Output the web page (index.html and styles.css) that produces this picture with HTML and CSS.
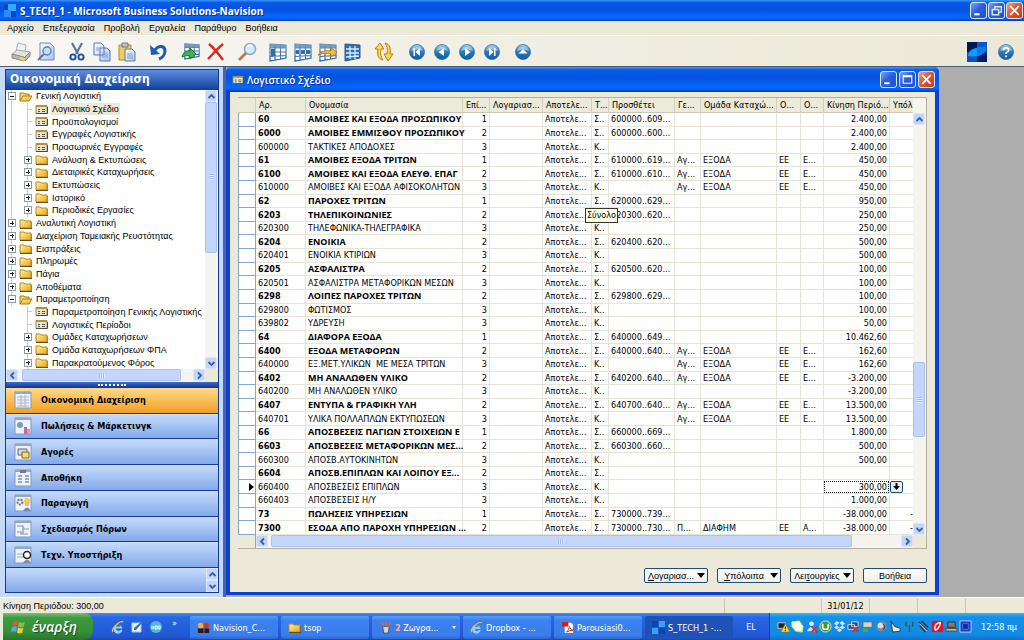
FILE: index.html
```html
<!DOCTYPE html>
<html lang="el">
<head>
<meta charset="utf-8">
<title>S_TECH_1 - Microsoft Business Solutions-Navision</title>
<link rel="stylesheet" href="styles.css">
</head>
<body>
<svg class="defs" aria-hidden="true">
  <defs>
    <linearGradient id="gBall" x1="0" y1="0" x2="0" y2="1"><stop offset="0" stop-color="#b4d8ee"/><stop offset=".45" stop-color="#2e7fbe"/><stop offset="1" stop-color="#0d5b9d"/></linearGradient>
    <linearGradient id="gFolder" x1="0" y1="0" x2="1" y2="1"><stop offset="0" stop-color="#fff0a0"/><stop offset="1" stop-color="#e9a81c"/></linearGradient>
    <linearGradient id="gGrid" x1="0" y1="0" x2="0" y2="1"><stop offset="0" stop-color="#6f93b8"/><stop offset="1" stop-color="#1f5fa8"/></linearGradient>
    <linearGradient id="gPaper" x1="0" y1="0" x2="1" y2="1"><stop offset="0" stop-color="#fff"/><stop offset="1" stop-color="#a9c4ee"/></linearGradient>
  </defs>
  <symbol id="folder" viewBox="0 0 13 11"><path d="M1 2h4l1 1h6v7H1z" fill="url(#gFolder)" stroke="#b98a1c"/><path d="M1 10.500h12V4" fill="none" stroke="#6b4d10"/></symbol>
  <symbol id="folder-open" viewBox="0 0 13 11"><path d="M1 10V2h4l1 1h4v2" fill="#f7d76a" stroke="#a87a18"/><path d="M1 10l3-5h9l-3 5z" fill="url(#gFolder)" stroke="#a87a18"/></symbol>
  <symbol id="form" viewBox="0 0 13 11"><path d="M1 1.500h11v8H1z" fill="#e9e4c8" stroke="#8a8878"/><path d="M1 2h11" stroke="#b09238" stroke-width="2"/><path d="M1 9.500h11.500V3" fill="none" stroke="#4c4a42"/><path d="M3 5.500h2M7 5.500h3M3 7.500h2M7 7.500h3" stroke="#555"/></symbol>
  <symbol id="tgrid" viewBox="0 0 20 20"><path d="M2 2l16 1v13L2 19z" fill="#fff"/><path d="M2 2l16 1v3L2 6z" fill="#7f9fc0"/><path d="M2 2l16 1v13L2 19zM2 6h16M2 10h16M2 14.500l16-1M7 2.500v16M12.500 3v14.500" fill="none" stroke="url(#gGrid)" stroke-width="1.200"/></symbol>
  <symbol id="ball" viewBox="0 0 18 18"><circle cx="9" cy="9" r="7.500" fill="url(#gBall)" stroke="#2a6a9e" stroke-width=".8"/><path d="M3 8a6.500 6.500 0 0 1 12 0q-6-3-12 0" fill="#fff" opacity=".4"/></symbol>
  <symbol id="nav-logo" viewBox="0 0 20 20"><path d="M0 0h20v20H0z" fill="#0a4fc0"/><path d="M0 0h10v10H0z" fill="#00175c"/><path d="M10 10h10v10H10z" fill="#001c70"/><path d="M10 0h10v10H10z" fill="#0758cf"/><path d="M1 13C2 7 9 4 19 6c0 6-7 10-18 8z" fill="#0b9cf5"/><path d="M10 5h9c0 6-4 8-9 9z" fill="#0a7ae4"/></symbol>
  <symbol id="ie" viewBox="0 0 14 14"><path d="M11 8.500H5a2.500 2.500 0 0 0 4.500 1.200h2A4.600 4.600 0 1 1 11.500 8.500M5 6.500h4.500a2.300 2.300 0 0 0-4.500 0" fill="#8fd0ff"/><path d="M2 12C-1 9 9 0 12.500 2" fill="none" stroke="#f3c433" stroke-width="1.200"/></symbol>
  <symbol id="up" viewBox="0 0 9 9"><path d="M1.500 6l3-3 3 3" fill="none" stroke="#3f5f98" stroke-width="1.800"/></symbol>
  <symbol id="down" viewBox="0 0 9 9"><path d="M1.500 3l3 3 3-3" fill="none" stroke="#3f5f98" stroke-width="1.800"/></symbol>
  <symbol id="left" viewBox="0 0 9 9"><path d="M6 1.500l-3 3 3 3" fill="none" stroke="#3f5f98" stroke-width="1.800"/></symbol>
  <symbol id="right" viewBox="0 0 9 9"><path d="M3 1.500l3 3-3 3" fill="none" stroke="#3f5f98" stroke-width="1.800"/></symbol>
  <symbol id="min" viewBox="0 0 14 14"><path d="M3 10.500h5" stroke="#fff" stroke-width="2"/></symbol>
  <symbol id="max" viewBox="0 0 14 14"><path d="M3 3.500h8v7H3z" fill="none" stroke="#fff"/><path d="M3 4h8" stroke="#fff" stroke-width="2"/></symbol>
  <symbol id="restore" viewBox="0 0 14 14"><path d="M5.500 6V3.500h6v5H9M3 6h6v5H3z" fill="none" stroke="#dce9ff" stroke-width="1.300"/></symbol>
  <symbol id="close" viewBox="0 0 14 14"><path d="M3 3l8 8M11 3l-8 8" stroke="#fff" stroke-width="1.700"/></symbol>
  <symbol id="page" viewBox="0 0 18 18"><path d="M1 1h16v16H1z" fill="#edf2fb" stroke="#8399b8"/><path d="M1 2h16" stroke="#8fa9cb" stroke-width="2"/></symbol>
</svg>

<header class="titlebar">
  <svg class="app-logo" viewBox="0 0 14 14"><path d="M5 0h8v7H5z" fill="#38a7ff"/><path d="M1 6h7v7H1z" fill="#2b8cf5"/><path d="M1 1h4v5H1zM8 7h5v6H8z" fill="#0646c8"/></svg>
  <h1>S_TECH_1 - Microsoft Business Solutions-Navision</h1>
  <div class="caption-buttons">
    <button aria-label="Ελαχιστοποίηση"><svg><use href="#min"/></svg></button>
    <button aria-label="Επαναφορά"><svg><use href="#restore"/></svg></button>
    <button class="x" aria-label="Κλείσιμο"><svg><use href="#close"/></svg></button>
  </div>
</header>

<nav class="menubar">
  <button>Αρχείο</button><button>Επεξεργασία</button><button>Προβολή</button><button>Εργαλεία</button><button>Παράθυρο</button><button>Βοήθεια</button>
</nav>

<div class="toolbar">
  <button aria-label="Εκτύπωση"><svg viewBox="0 0 20 20"><path d="M5 9l2-8 8 2-1 7z" fill="#eef4ff" stroke="#9fb3d0"/><path d="M1 12l5-4 13 2-5 6z" fill="#e4e4de" stroke="#a5a5a0"/><path d="M1 12v4l12 3v-4zM14 15v4l5-5v-4z" fill="#b9b9b4" stroke="#8a8a88"/><path d="M8 16l4 3 3-2-4-2z" fill="#f1d65c"/></svg></button>
  <button aria-label="Προεπισκόπηση"><svg viewBox="0 0 20 20"><path d="M4 1h10l4 4v13H4z" fill="url(#gPaper)" stroke="#6b8bc0"/><circle cx="11" cy="9" r="4" fill="#bfe0fa" stroke="#5d7ea8" stroke-width="1.400"/><path d="M8 12l-6 6" stroke="#6f6f90" stroke-width="2"/></svg></button>
  <button class="gap" aria-label="Αποκοπή"><svg viewBox="0 0 20 20"><path d="M5 1l6 11M15 1L9 12" stroke="#58779c" stroke-width="2.200"/><circle cx="6" cy="15" r="2.600" fill="none" stroke="#1a4fa0" stroke-width="1.900"/><circle cx="14" cy="15" r="2.600" fill="none" stroke="#1a4fa0" stroke-width="1.900"/></svg></button>
  <button aria-label="Αντιγραφή"><svg viewBox="0 0 20 20"><path d="M2 1h7l3 3v9H2zM8 6h7l3 3v10H8z" fill="url(#gPaper)" stroke="#5878b4"/><path d="M4 6h5M4 8h3M10 11h5M10 13h6M10 15h6" stroke="#7f9cd0"/></svg></button>
  <button aria-label="Επικόλληση"><svg viewBox="0 0 20 20"><path d="M2 3h12v15H2z" fill="#f0cf58" stroke="#a88b30"/><path d="M5 1h6v4H5z" fill="#bcc4cf" stroke="#777"/><path d="M8 7h7l3 3v9H8z" fill="url(#gPaper)" stroke="#5878b4"/><path d="M10 12h5M10 14h6M10 16h6" stroke="#7f9cd0"/></svg></button>
  <button class="gap" aria-label="Αναίρεση"><svg viewBox="0 0 20 20"><path d="M6 9C11 2 17 4 17 9c0 4-3 7-6 8" fill="none" stroke="#1c5cb4" stroke-width="3"/><path d="M2 3l1 10 9-1z" fill="#1c5cb4"/></svg></button>
  <button class="gap-wide" aria-label="Εισαγωγή"><svg viewBox="0 0 20 20"><use href="#tgrid" width="20" height="18" x="1"/><path d="M1 15c1-5 5-6 8-6V6l6 6-6 5v-3c-3-1-5 0-8 1z" fill="#45b346" stroke="#1f7a28"/></svg></button>
  <button aria-label="Διαγραφή"><svg viewBox="0 0 20 20"><path d="M3 2c5 4 9 9 14 16M17 2C11 7 7 12 2 17" stroke="#e0251b" stroke-width="2.400" fill="none"/></svg></button>
  <button class="gap" aria-label="Εύρεση"><svg viewBox="0 0 20 20"><circle cx="13" cy="7" r="5.500" fill="#d4ecfb" stroke="#8ea9c4" stroke-width="1.500"/><path d="M9 11l-7 7" stroke="#b47a50" stroke-width="2.800"/><path d="M10 5q3-3 5-1" stroke="#fff" fill="none" stroke-width="1.500"/></svg></button>
  <button class="gap" aria-label="Φίλτρο πεδίου"><svg viewBox="0 0 20 20"><use href="#tgrid" width="20" height="20"/><path d="M3 7h4v7H3z" fill="#2f6cb0"/></svg></button>
  <button aria-label="Φίλτρο πίνακα"><svg viewBox="0 0 20 20"><use href="#tgrid" width="20" height="20"/><path d="M3 8h14v4H3z" fill="#2f6cb0"/><path d="M7 8v4M12.500 8v4" stroke="#dbe9f6"/></svg></button>
  <button aria-label="Φίλτρο ροής"><svg viewBox="0 0 20 20"><use href="#tgrid" width="20" height="20"/><path d="M0 13c4-4 8-5 13-4V6l6 4-6 5v-3c-5-1-9-1-13 1z" fill="#f9c33a" stroke="#bd7a14"/></svg></button>
  <button aria-label="Εμφάνιση όλων"><svg viewBox="0 0 20 20"><path d="M2 2l15 1v13L2 19z" fill="#2e6fae" stroke="#37597f"/><path d="M3 7h13M3 11h13M3 15l13-1M7 4v13M12 4v13" stroke="#d5f0ff" stroke-width="1.300"/></svg></button>
  <button class="gap" aria-label="Ταξινόμηση"><svg viewBox="0 0 20 20"><path d="M9 18c-5-1-6-5-5-11H1l5-6 4 6H7c-1 5 0 8 2 11z" fill="#ffd451" stroke="#bd7a14"/><path d="M11 1c5 1 6 6 5 11h3l-5 7-4-7h3c1-5 0-8-2-11z" fill="#ffd451" stroke="#bd7a14"/></svg></button>
  <button class="gap-wide" aria-label="Πρώτη"><svg viewBox="-1 -1 20 20"><use href="#ball" width="18" height="18"/><path d="M12 5v8L7.500 9zM5.500 5h1.500v8H5.500z" fill="#fff"/></svg></button>
  <button aria-label="Προηγούμενη"><svg viewBox="-1 -1 20 20"><use href="#ball" width="18" height="18"/><path d="M11 5v8L5.500 9z" fill="#fff"/></svg></button>
  <button aria-label="Επόμενη"><svg viewBox="-1 -1 20 20"><use href="#ball" width="18" height="18"/><path d="M7 5v8l5.500-4z" fill="#fff"/></svg></button>
  <button aria-label="Τελευταία"><svg viewBox="-1 -1 20 20"><use href="#ball" width="18" height="18"/><path d="M6 5v8l4.500-4zM11 5h1.500v8H11z" fill="#fff"/></svg></button>
  <button class="gap" aria-label="Λίστα"><svg viewBox="-1 -1 20 20"><use href="#ball" width="18" height="18"/><path d="M4.500 10.500h9L9 6z" fill="#fff"/></svg></button>
  <button class="brand" aria-label="Navision"><svg><use href="#nav-logo"/></svg></button>
  <button aria-label="Βοήθεια"><svg viewBox="-1 -1 20 20"><use href="#ball" width="18" height="18"/><path d="M6.500 7.500c0-4 5.500-3.500 5 0-.3 1.500-2.500 1.500-2.500 3.500M9 12.500v1.800" fill="none" stroke="#fff" stroke-width="1.700"/></svg></button>
</div>

<main class="work">
  <aside class="sidebar">
    <div class="pane">
      <h2>Οικονομική Διαχείριση</h2>
      <div class="tree-box">
        <ul class="tree">
          <li><button class="tg minus" aria-label="Σύμπτυξη"></button><svg><use href="#folder-open"/></svg><a href="#">Γενική Λογιστική</a>
          <li class="sub leaf"><svg><use href="#form"/></svg><a href="#" class="current">Λογιστικό Σχέδιο</a>
          <li class="sub leaf"><svg><use href="#form"/></svg><a href="#">Προϋπολογισμοί</a>
          <li class="sub leaf"><svg><use href="#form"/></svg><a href="#">Εγγραφές Λογιστικής</a>
          <li class="sub leaf"><svg><use href="#form"/></svg><a href="#">Προσωρινές Εγγραφές</a>
          <li class="sub"><button class="tg" aria-label="Ανάπτυξη"></button><svg><use href="#folder"/></svg><a href="#">Ανάλυση &amp; Εκτυπώσεις</a>
          <li class="sub"><button class="tg" aria-label="Ανάπτυξη"></button><svg><use href="#folder"/></svg><a href="#">Διεταιρικές Καταχωρήσεις</a>
          <li class="sub"><button class="tg" aria-label="Ανάπτυξη"></button><svg><use href="#folder"/></svg><a href="#">Εκτυπώσεις</a>
          <li class="sub"><button class="tg" aria-label="Ανάπτυξη"></button><svg><use href="#folder"/></svg><a href="#">Ιστορικό</a>
          <li class="sub"><button class="tg" aria-label="Ανάπτυξη"></button><svg><use href="#folder"/></svg><a href="#">Περιοδικές Εργασίες</a>
          <li><button class="tg" aria-label="Ανάπτυξη"></button><svg><use href="#folder"/></svg><a href="#">Αναλυτική Λογιστική</a>
          <li><button class="tg" aria-label="Ανάπτυξη"></button><svg><use href="#folder"/></svg><a href="#">Διαχείριση Ταμειακής Ρευστότητας</a>
          <li><button class="tg" aria-label="Ανάπτυξη"></button><svg><use href="#folder"/></svg><a href="#">Εισπράξεις</a>
          <li><button class="tg" aria-label="Ανάπτυξη"></button><svg><use href="#folder"/></svg><a href="#">Πληρωμές</a>
          <li><button class="tg" aria-label="Ανάπτυξη"></button><svg><use href="#folder"/></svg><a href="#">Πάγια</a>
          <li><button class="tg" aria-label="Ανάπτυξη"></button><svg><use href="#folder"/></svg><a href="#">Αποθέματα</a>
          <li><button class="tg minus" aria-label="Σύμπτυξη"></button><svg><use href="#folder-open"/></svg><a href="#">Παραμετροποίηση</a>
          <li class="sub leaf end"><svg><use href="#form"/></svg><a href="#">Παραμετροποίηση Γενικής Λογιστικής</a>
          <li class="sub leaf end"><svg><use href="#form"/></svg><a href="#">Λογιστικές Περίοδοι</a>
          <li class="sub end"><button class="tg" aria-label="Ανάπτυξη"></button><svg><use href="#folder"/></svg><a href="#">Ομάδες Καταχωρήσεων</a>
          <li class="sub end"><button class="tg" aria-label="Ανάπτυξη"></button><svg><use href="#folder"/></svg><a href="#">Ομάδα Καταχωρήσεων ΦΠΑ</a>
          <li class="sub end"><button class="tg" aria-label="Ανάπτυξη"></button><svg><use href="#folder"/></svg><a href="#">Παρακρατούμενος Φόρος</a>
        </ul>
        <div class="vbar tree-v"><button aria-label="Πάνω"><svg><use href="#up"/></svg></button><span class="thumb"></span><button aria-label="Κάτω"><svg><use href="#down"/></svg></button></div>
        <div class="hbar"><button aria-label="Αριστερά"><svg><use href="#left"/></svg></button><span class="thumb"></span><button aria-label="Δεξιά"><svg><use href="#right"/></svg></button></div>
        <span class="corner"></span>
      </div>
      <div class="splitter"></div>
      <nav class="areas">
        <button class="on"><svg viewBox="0 0 18 18"><use href="#page"/><path d="M3 6h12M3 9h12M3 12h12M3 15h12M7 4v12M11 4v12" stroke="#a7b8cf"/></svg>Οικονομική Διαχείριση</button>
        <button><svg viewBox="0 0 18 18"><use href="#page"/><circle cx="6" cy="8" r="3" fill="#7b9cc8"/><path d="M10 10h3v7h-3z" fill="#c46a9a"/><path d="M13 12h3v5h-3z" fill="#d99"/></svg>Πωλήσεις &amp; Μάρκετινγκ</button>
        <button><svg viewBox="0 0 18 18"><use href="#page"/><path d="M4 6h9v6H4z" fill="#cfdcf0" stroke="#667"/><path d="M8 9h7v6H8z" fill="#f7de62" stroke="#786820"/></svg>Αγορές</button>
        <button><svg viewBox="0 0 18 18"><use href="#page"/><path d="M6 1h6v3H6z" fill="#778"/><path d="M4 7h4M4 10h4M4 13h4M11 7h4M11 10h4M11 13h4" stroke="#7f93b0" stroke-width="1.500"/></svg>Αποθήκη</button>
        <button><svg viewBox="0 0 18 18"><use href="#page"/><circle cx="6" cy="8" r="2.500" fill="none" stroke="#778" stroke-width="2" stroke-dasharray="2 1"/><circle cx="13" cy="7" r="3" fill="#f6cf3a"/><circle cx="13" cy="10" r="2.400" fill="#e9b98a"/><path d="M9 17q4-7 8 0z" fill="#6f86c0"/></svg>Παραγωγή</button>
        <button><svg viewBox="0 0 18 18"><use href="#page"/><path d="M3 6h6v3h6M3 12h4v2h7M9 9v5" fill="none" stroke="#8394ad" stroke-width="1.200"/></svg>Σχεδιασμός Πόρων</button>
        <button><svg viewBox="0 0 18 18"><use href="#page"/><path d="M3 8h6M3 11h6" stroke="#9ab"/><circle cx="13" cy="9" r="3.500" fill="#fff" stroke="#222" stroke-width="1.500"/><path d="M9 17q4-7 8 0z" fill="#889"/></svg>Τεχν. Υποστήριξη</button>
      </nav>
      <div class="areas-foot"><div class="vbar"><button aria-label="Πάνω"><svg><use href="#up"/></svg></button><button aria-label="Κάτω"><svg><use href="#down"/></svg></button></div></div>
    </div>
  </aside>

  <section class="window">
    <header class="window-title">
      <svg class="form-ico"><use href="#form"/></svg>
      <h2>Λογιστικό Σχέδιο</h2>
      <div class="caption-buttons">
        <button aria-label="Ελαχιστοποίηση"><svg><use href="#min"/></svg></button>
        <button aria-label="Μεγιστοποίηση"><svg><use href="#max"/></svg></button>
        <button class="x" aria-label="Κλείσιμο"><svg><use href="#close"/></svg></button>
      </div>
    </header>
    <div class="window-body">
      <div class="grid-box">
        <table class="ledger">
          <colgroup><col class="c18"><col class="c50"><col class="c157"><col class="c27"><col class="c53"><col class="c49"><col class="c17"><col class="c66"><col class="c26"><col class="c76"><col class="c24"><col class="c23"><col class="c66"><col class="c24"></colgroup>
          <thead><tr><th><th>Αρ.<th>Ονομασία<th>Επί...<th>Λογαριασ...<th>Αποτελε...<th>Τ...<th>Προσθέτει<th>Γε...<th>Ομάδα Καταχώ...<th>Ο...<th>Ο...<th>Κίνηση Περιό...<th>Υπόλ</thead>
          <tbody>
            <tr class="b"><td><td>60<td>ΑΜΟΙΒΕΣ ΚΑΙ ΕΞΟΔΑ ΠΡΟΣΩΠΙΚΟΥ<td>1<td><td>Αποτελε...<td>Σ..<td>600000..609...<td><td><td><td><td>2.400,00<td>
            <tr class="b"><td><td>6000<td>ΑΜΟΙΒΕΣ ΕΜΜΙΣΘΟΥ ΠΡΟΣΩΠΙΚΟΥ<td>2<td><td>Αποτελε...<td>Σ..<td>600000..600...<td><td><td><td><td>2.400,00<td>
            <tr><td><td>600000<td>ΤΑΚΤΙΚΕΣ ΑΠΟΔΟΧΕΣ<td>3<td><td>Αποτελε...<td>Κ..<td><td><td><td><td><td>2.400,00<td>
            <tr class="b"><td><td>61<td>ΑΜΟΙΒΕΣ ΕΞΟΔΑ ΤΡΙΤΩΝ<td>1<td><td>Αποτελε...<td>Σ..<td>610000..619...<td>Αγ...<td>ΕΞΟΔΑ<td>ΕΕ<td>Ε...<td>450,00<td>
            <tr class="b"><td><td>6100<td>ΑΜΟΙΒΕΣ ΚΑΙ ΕΞΟΔΑ ΕΛΕΥΘ. ΕΠΑΓ<td>2<td><td>Αποτελε...<td>Σ..<td>610000..610...<td>Αγ...<td>ΕΞΟΔΑ<td>ΕΕ<td>Ε...<td>450,00<td>
            <tr><td><td>610000<td>ΑΜΟΙΒΕΣ ΚΑΙ ΕΞΟΔΑ ΑΦΙΣΟΚΟΛΗΤΩΝ<td>3<td><td>Αποτελε...<td>Κ..<td><td>Αγ...<td>ΕΞΟΔΑ<td>ΕΕ<td>Ε...<td>450,00<td>
            <tr class="b"><td><td>62<td>ΠΑΡΟΧΕΣ ΤΡΙΤΩΝ<td>1<td><td>Αποτελε...<td>Σ..<td>620000..629...<td><td><td><td><td>950,00<td>
            <tr class="b"><td><td>6203<td>ΤΗΛΕΠΙΚΟΙΝΩΝΙΕΣ<td>2<td><td>Αποτελε...<td>Σ..<td>620300..620...<td><td><td><td><td>250,00<td>
            <tr><td><td>620300<td>ΤΗΛΕΦΩΝΙΚΑ-ΤΗΛΕΓΡΑΦΙΚΑ<td>3<td><td>Αποτελε...<td>Κ..<td><td><td><td><td><td>250,00<td>
            <tr class="b"><td><td>6204<td>ΕΝΟΙΚΙΑ<td>2<td><td>Αποτελε...<td>Σ..<td>620400..620...<td><td><td><td><td>500,00<td>
            <tr><td><td>620401<td>ΕΝΟΙΚΙΑ ΚΤΙΡΙΩΝ<td>3<td><td>Αποτελε...<td>Κ..<td><td><td><td><td><td>500,00<td>
            <tr class="b"><td><td>6205<td>ΑΣΦΑΛΙΣΤΡΑ<td>2<td><td>Αποτελε...<td>Σ..<td>620500..620...<td><td><td><td><td>100,00<td>
            <tr><td><td>620501<td>ΑΣΦΑΛΙΣΤΡΑ ΜΕΤΑΦΟΡΙΚΩΝ ΜΕΣΩΝ<td>3<td><td>Αποτελε...<td>Κ..<td><td><td><td><td><td>100,00<td>
            <tr class="b"><td><td>6298<td>ΛΟΙΠΕΣ ΠΑΡΟΧΕΣ ΤΡΙΤΩΝ<td>2<td><td>Αποτελε...<td>Σ..<td>629800..629...<td><td><td><td><td>100,00<td>
            <tr><td><td>629800<td>ΦΩΤΙΣΜΟΣ<td>3<td><td>Αποτελε...<td>Κ..<td><td><td><td><td><td>100,00<td>
            <tr><td><td>639802<td>ΥΔΡΕΥΣΗ<td>3<td><td>Αποτελε...<td>Κ..<td><td><td><td><td><td>50,00<td>
            <tr class="b"><td><td>64<td>ΔΙΑΦΟΡΑ ΕΞΟΔΑ<td>1<td><td>Αποτελε...<td>Σ..<td>640000..649...<td><td><td><td><td>10.462,60<td>
            <tr class="b"><td><td>6400<td>ΕΞΟΔΑ ΜΕΤΑΦΟΡΩΝ<td>2<td><td>Αποτελε...<td>Σ..<td>640000..640...<td>Αγ...<td>ΕΞΟΔΑ<td>ΕΕ<td>Ε...<td>162,60<td>
            <tr><td><td>640000<td>ΕΞ.ΜΕΤ.ΥΛΙΚΩΝ&nbsp; ΜΕ ΜΕΣΑ ΤΡΙΤΩΝ<td>3<td><td>Αποτελε...<td>Κ..<td><td>Αγ...<td>ΕΞΟΔΑ<td>ΕΕ<td>Ε...<td>162,60<td>
            <tr class="b"><td><td>6402<td>ΜΗ ΑΝΑΛΩΘΕΝ ΥΛΙΚΟ<td>2<td><td>Αποτελε...<td>Σ..<td>640200..640...<td>Αγ...<td>ΕΞΟΔΑ<td>ΕΕ<td>Ε...<td>-3.200,00<td>
            <tr><td><td>640200<td>ΜΗ ΑΝΑΛΩΘΕΝ ΥΛΙΚΟ<td>3<td><td>Αποτελε...<td>Κ..<td><td><td><td><td><td>-3.200,00<td>
            <tr class="b"><td><td>6407<td>ΕΝΤΥΠΑ &amp; ΓΡΑΦΙΚΗ ΥΛΗ<td>2<td><td>Αποτελε...<td>Σ..<td>640700..640...<td>Αγ...<td>ΕΞΟΔΑ<td>ΕΕ<td>Ε...<td>13.500,00<td>
            <tr><td><td>640701<td>ΥΛΙΚΑ ΠΟΛΛΑΠΛΩΝ ΕΚΤΥΠΩΣΕΩΝ<td>3<td><td>Αποτελε...<td>Κ..<td><td>Αγ...<td>ΕΞΟΔΑ<td>ΕΕ<td>Ε...<td>13.500,00<td>
            <tr class="b"><td><td>66<td>ΑΠΟΣΒΕΣΕΙΣ ΠΑΓΙΩΝ ΣΤΟΙΧΕΙΩΝ Ε<td>1<td><td>Αποτελε...<td>Σ..<td>660000..669...<td><td><td><td><td>1.800,00<td>
            <tr class="b"><td><td>6603<td>ΑΠΟΣΒΕΣΕΙΣ ΜΕΤΑΦΟΡΙΚΩΝ ΜΕΣ...<td>2<td><td>Αποτελε...<td>Σ..<td>660300..660...<td><td><td><td><td>500,00<td>
            <tr><td><td>660300<td>ΑΠΟΣΒ.ΑΥΤΟΚΙΝΗΤΩΝ<td>3<td><td>Αποτελε...<td>Κ..<td><td><td><td><td><td>500,00<td>
            <tr class="b"><td><td>6604<td>ΑΠΟΣΒ.ΕΠΙΠΛΩΝ ΚΑΙ ΛΟΙΠΟΥ ΕΞ...<td>2<td><td>Αποτελε...<td>Σ..<td><td><td><td><td><td><td>
            <tr><td><i class="pointer"></i><td>660400<td>ΑΠΟΣΒΕΣΕΙΣ ΕΠΙΠΛΩΝ<td>3<td><td>Αποτελε...<td>Κ..<td><td><td><td><td><td class="edit"><input value="300,00" aria-label="Κίνηση Περιόδου"><td class="look"><button aria-label="Αναζήτηση"><svg viewBox="0 0 9 9"><path d="M3.500 1h2v3H8L4.500 8 1 4h2.500z"/></svg></button>
            <tr><td><td>660403<td>ΑΠΟΣΒΕΣΕΙΣ Η/Υ<td>3<td><td>Αποτελε...<td>Κ..<td><td><td><td><td><td>1.000,00<td>
            <tr class="b"><td><td>73<td>ΠΩΛΗΣΕΙΣ ΥΠΗΡΕΣΙΩΝ<td>1<td><td>Αποτελε...<td>Σ..<td>730000..739...<td><td><td><td><td>-38.000,00<td>-
            <tr class="b"><td><td>7300<td>ΕΣΟΔΑ ΑΠΟ ΠΑΡΟΧΗ ΥΠΗΡΕΣΙΩΝ ...<td>2<td><td>Αποτελε...<td>Σ..<td>730000..730...<td>Π...<td>ΔΙΑΦΗΜ<td>ΕΕ<td>Α...<td>-38.000,00<td>-
          </tbody>
        </table>
        <div class="vbar grid-v"><button aria-label="Πάνω"><svg><use href="#up"/></svg></button><span class="thumb"></span><button aria-label="Κάτω"><svg><use href="#down"/></svg></button></div>
        <div class="hbar grid-h"><span class="stub"></span><button aria-label="Αριστερά"><svg><use href="#left"/></svg></button><span class="thumb"></span><button aria-label="Δεξιά"><svg><use href="#right"/></svg></button></div>
        <span class="corner"></span>
        <div class="tooltip" role="tooltip">Σύνολο</div>
      </div>
      <div class="actions">
        <button class="menu"><span><u>Λ</u>ογαριασ...</span></button>
        <button class="menu"><span><u>Υ</u>πόλοιπα</span></button>
        <button class="menu"><span>Λει<u>τ</u>ουργίες</span></button>
        <button><span>Βοήθεια</span></button>
      </div>
    </div>
  </section>
</main>

<footer class="status"><span class="msg">Κίνηση Περιόδου: 300,00</span><span class="s95"></span><span class="s48 date">31/01/12</span><span class="s48"></span><span class="s48"></span><span class="s42"></span></footer>

<div class="taskbar">
  <button class="start"><svg viewBox="0 0 16 16"><path d="M2 3q3-2 5-.5L6 7q-2-1.500-5 0z" fill="#e8542c"/><path d="M8 3q3 1.500 6 0l-1.500 5Q10 9 7 7.500z" fill="#7fc33d"/><path d="M1 8q3-1.500 5 0l-1 5q-2-1.500-5 0z" fill="#5aa0f2"/><path d="M7 8.500q3 1.500 5.500.5L11 14q-3 1-5-.5z" fill="#f7cc38"/></svg>έναρξη</button>
  <div class="quick">
    <button aria-label="Internet Explorer"><svg><use href="#ie"/></svg></button>
    <button aria-label="Επιφάνεια εργασίας"><svg viewBox="0 0 14 14"><path d="M2 3h9v9H2z" fill="#e8f2ff" stroke="#9cf"/><path d="M4 8l7-6 1 1-6 7H4z" fill="#3c6ea8"/></svg></button>
    <button aria-label="KBS"><svg viewBox="0 0 14 14"><circle cx="7" cy="7" r="6" fill="#55b7d8"/><path d="M3 6v3M4.500 6v3M6 6h2v3H6zM9 6h2v3H9z" stroke="#dff" fill="none"/></svg></button>
    <span class="more">»</span>
  </div>
  <div class="tasks">
    <button><svg viewBox="0 0 14 14"><circle cx="4" cy="5" r="3" fill="#e9b23c"/><circle cx="10" cy="5" r="3" fill="#c23a20"/><path d="M1 13V8h6v5zM8 13V8h5v5z" fill="#2c1a1a"/></svg><span>Navision_C...</span></button>
    <button><svg viewBox="0 0 13 11"><use href="#folder"/></svg><span>tsop</span></button>
    <button class="group"><svg viewBox="0 0 14 14"><path d="M4 6h7l-1 7H5z" fill="#c9d6e8" stroke="#456"/><path d="M5 6L3 1M8 6V1M10 6l2-4" stroke="#e5632a" stroke-width="1.600"/></svg><span><b>2</b> Ζωγρα...</span></button>
    <button><svg><use href="#ie"/></svg><span>Dropbox - ...</span></button>
    <button><svg viewBox="0 0 14 14"><path d="M4 2h7l2 2v9H4z" fill="#fff"/><path d="M1 1h7v5H1z" fill="#d2201c"/><path d="M6 12q3-3 3-6 1 3 4 4-4 0-7 2z" fill="none" stroke="#d2201c"/></svg><span>Parousiasi0...</span></button>
    <button class="active"><svg viewBox="0 0 14 14"><path d="M7 0h7v7H7zM0 7h7v7H0z" fill="#3aa0f8"/><path d="M0 0h7v7H0zM7 7h7v7H7z" fill="#0a46b8"/></svg><span>S_TECH_1 -...</span></button>
  </div>
  <button class="lang">EL</button>
  <div class="tray">
    <svg viewBox="0 0 14 14"><path d="M1 3h8v6H1z" fill="#223" stroke="#ccd"/><path d="M9 4l5 9H4z" fill="#ffd52e" stroke="#8a6a00" stroke-width=".6"/><path d="M9 7v3M9 11v1" stroke="#000"/></svg>
    <svg viewBox="0 0 14 14"><path d="M1 2l8-1 4 6-1 6-7-1-4-5z" fill="#f4ffd8" stroke="#c8e86a"/></svg>
    <svg viewBox="0 0 14 14"><circle cx="7" cy="4" r="2.500" fill="#dff"/><path d="M2 12q5-9 10 0z" fill="#bfe6ff"/><path d="M7 7l6 6M13 7l-6 6" stroke="#e02a20" stroke-width="1.800"/></svg>
    <svg viewBox="0 0 14 14"><circle cx="7" cy="7" r="6" fill="#3d9d3a" stroke="#d8f0d0"/><path d="M4 4v4q0 2 3 2t3-2V4" fill="none" stroke="#fff" stroke-width="1.800"/></svg>
    <svg viewBox="0 0 14 14"><path d="M4 1l3 2-3 3-3-2zM10 1l3 3-3 2-3-3zM4 6l3 2-3 2-3-2zM10 6l3 2-3 2-3-2zM7 9l3 2-3 2-3-2z" fill="#cfeaff"/></svg>
    <svg viewBox="0 0 14 14"><path d="M1 5h7v5H1zM5 2h7v5H5z" fill="#334a80" stroke="#cde"/><path d="M6 7l6 6M12 7l-6 6" stroke="#e02a20" stroke-width="1.800"/></svg>
    <svg viewBox="0 0 14 14"><path d="M2 2h10v6H2z" fill="#cfd4cc" stroke="#666"/><path d="M2 9h5v4H2z" fill="#49ad3c"/></svg>
    <svg viewBox="0 0 14 14"><circle cx="7" cy="7" r="5.500" fill="#8c8c8c"/><circle cx="6" cy="6" r="3" fill="#ddd"/><path d="M9 4q3 3 0 7" stroke="#333" fill="none"/></svg>
    <svg viewBox="0 0 14 14"><path d="M2 1l4 6 6 2v3l-8 1z" fill="#eee" stroke="#333"/></svg>
    <svg viewBox="0 0 14 14"><path d="M7 5v8M4 2q-2 3 0 5M10 2q2 3 0 5" fill="none" stroke="#2b5d36" stroke-width="1.400"/></svg>
    <svg viewBox="0 0 14 14"><path d="M2 2l9 9M5 1l7 7M3 6l6 7" stroke="#2a3140" stroke-width="1.400"/><path d="M3 4l8 8" stroke="#dde"/></svg>
    <svg viewBox="0 0 14 14"><path d="M1 1h12v12H1z" fill="#d8182c"/><path d="M4 10q0-7 6-7-1 7-6 8" fill="none" stroke="#fff" stroke-width="1.500"/></svg>
    <svg viewBox="0 0 14 14"><path d="M3 2h8v6H3z" fill="#7a7a72" stroke="#333"/><path d="M1 9h12v3H1z" fill="#b8b8a8" stroke="#444"/></svg>
    <svg viewBox="0 0 14 14"><path d="M1 1h12v12H1z" fill="#1840c8" stroke="#c8d8ff"/><path d="M4 4h6v6H4z" fill="#0828a0" stroke="#4878f0"/></svg>
    <time>12:58 πμ</time>
  </div>
</div>
</body>
</html>
```
FILE: styles.css
```css
* { box-sizing: border-box; }
body {
  margin: 0;
  height: 100vh;
  display: flex;
  flex-direction: column;
  overflow: hidden;
  background: #ece9d8;
  color: #000;
  font: 9px/12px "DejaVu Sans Condensed", "DejaVu Sans", "Noto Sans", sans-serif;
}
button, input { font: inherit; color: inherit; padding: 0; margin: 0; border: 0; background: none; }
h1, h2, ul { margin: 0; padding: 0; }
ul { list-style: none; }
a { color: inherit; text-decoration: none; }
svg { display: block; flex: none; }
.defs { position: absolute; width: 0; height: 0; }

/* Window captions */
.titlebar, .window-title {
  display: flex;
  align-items: center;
  color: #fff;
  background: linear-gradient(#3c97ff 0, #0a5be6 12%, #0453e0 45%, #0468fb 80%, #0263f7 88%, #0238b0 100%);
}
.titlebar { height: 21px; padding: 0 1px 0 3px; gap: 3px; flex: none; }
.app-logo { width: 14px; height: 14px; }
.titlebar h1, .window-title h2 {
  flex: 1;
  font: bold 10px/14px "Open Sans", "Noto Sans", sans-serif;
  text-shadow: 1px 1px #0a2f8c;
}
.window-title h2 { font-weight: 600; }
.caption-buttons { display: flex; gap: 1px; }
.caption-buttons button {
  width: 17px;
  height: 17px;
  border: 1px solid #d9e5ff;
  border-radius: 3px;
  background: linear-gradient(135deg, #7ea5f5, #2a5fe0 45%, #1c4ed2);
}
.caption-buttons .x { background: linear-gradient(135deg, #f0a088, #dd5a34 45%, #c23a12); }
.caption-buttons svg { width: 15px; height: 15px; }

/* Menu and tool bars */
.menubar, .tree, .status, .actions { font-family: "Liberation Sans", Arial, sans-serif; }
.menubar {
  height: 15px;
  flex: none;
  display: flex;
  align-items: center;
  gap: 9px;
  padding: 0 7px;
  border-bottom: 1px solid #fff;
}
.toolbar {
  height: 31px;
  flex: none;
  display: flex;
  align-items: center;
  padding: 1px 6px 0 8px;
  background: linear-gradient(90deg, #f8f7f4, #f2f0e6 40%, #ebe8d7);
  border-bottom: 1px solid #4d5c70;
}
.toolbar button { width: 25px; height: 25px; display: grid; place-items: center; }
.toolbar svg { width: 20px; height: 20px; }
.toolbar .gap { margin-left: 6px; }
.toolbar .gap-wide { margin-left: 8px; }
.toolbar .brand { margin: 0 4px 0 auto; }

/* Work area */
.work { flex: 1; min-height: 0; display: flex; background: #adadad; }
.sidebar {
  width: 226px;
  flex: none;
  padding: 2px 4px 4px 5px;
  background: #c3daf9;
  border-right: 3px solid #4a63a8;
  display: flex;
}
.pane { flex: 1; min-width: 0; display: flex; flex-direction: column; border: 1px solid #16389a; background: #fff; }
.pane h2 {
  height: 20px;
  flex: none;
  padding-left: 4px;
  color: #fff;
  background: linear-gradient(#5f8ee0, #0f3f9c);
  font: bold 12px/19px "DejaVu Sans Condensed", "DejaVu Sans", sans-serif;
}
.tree-box { flex: 1; min-height: 0; display: grid; grid-template: minmax(0, 1fr) 13px / minmax(0, 1fr) 13px; }
.tree {
  height: 282px;
  min-height: 0;
  max-height: 100%;
  display: grid;
  grid-template-rows: repeat(22, minmax(0, 1fr));
  overflow: hidden;
}
.tree li {
  display: flex;
  align-items: center;
  gap: 3px;
  padding-left: 2px;
  white-space: nowrap;
  background: linear-gradient(#ccc, #ccc) 5px 0 / 1px 100% no-repeat;
}
.tree svg { width: 13px; height: 11px; }
.tree .sub {
  padding-left: 18px;
  background: linear-gradient(#ccc, #ccc) 5px 0 / 1px 100% no-repeat, linear-gradient(#ccc, #ccc) 21px 0 / 1px 100% no-repeat;
}
.tree .end { background: linear-gradient(#ccc, #ccc) 21px 0 / 1px 100% no-repeat; }
.tree .leaf::before { content: ""; width: 4px; height: 1px; margin-left: 4px; background: #ccc; }
.tree a { padding: 0 1px; line-height: 12px; }
.tree .current { background: #ece9d8; }
.tg {
  width: 8px;
  height: 8px;
  flex: none;
  border: 1px solid #8b9ab0;
  background: linear-gradient(#222, #222) center / 4px 1px no-repeat, linear-gradient(#222, #222) center / 1px 4px no-repeat, #fff;
}
.tg.minus { background: linear-gradient(#222, #222) center / 4px 1px no-repeat, #fff; }

/* Scroll bars */
.vbar, .hbar { display: flex; background: #f5f4ef; }
.vbar { flex-direction: column; }
.vbar button, .hbar button {
  width: 12px;
  height: 12px;
  flex: none;
  display: grid;
  place-items: center;
  border: 1px solid #dbe6fd;
  border-radius: 2px;
  background: #c3d4fd;
}
.vbar button svg, .hbar button svg { width: 9px; height: 9px; }
.vbar > :last-child, .vbar .thumb + button { margin-top: auto; }
.hbar > :last-child { margin-left: auto; }
.thumb { border: 1px solid #a9c0f2; border-radius: 2px; background: #c5d6fd; }
.vbar .thumb {
  width: 12px;
  background: repeating-linear-gradient(#a4bbee 0 1px, #dfe9ff 1px 2px) center / 5px 6px no-repeat, #c5d6fd;
}
.hbar .thumb {
  height: 12px;
  margin-left: 4px;
  background: repeating-linear-gradient(90deg, #a4bbee 0 1px, #dfe9ff 1px 2px) center / 6px 5px no-repeat, #c5d6fd;
}
.tree-v .thumb { height: 54%; }
.tree-box .hbar .thumb { width: 80%; }
.corner { background: #ece9d8; }

/* Area buttons */
.splitter {
  height: 6px;
  flex: none;
  background: linear-gradient(#3d6cc8, #0c3590);
}
.splitter::after {
  content: "";
  display: block;
  width: 28px;
  margin: 0 auto;
  padding-top: 2px;
  border-bottom: 2px dotted #fff;
}
.areas { height: 180px; flex: none; display: flex; flex-direction: column; }
.areas button {
  flex: 1;
  display: flex;
  align-items: center;
  gap: 9px;
  padding-left: 8px;
  font-weight: bold;
  text-align: left;
  background: linear-gradient(#c6dcfa, #84a9ea);
  border-bottom: 1px solid #16389a;
}
.areas .on { background: linear-gradient(#ffd98a, #f8bd55 50%, #ef9e26); }
.areas svg { width: 18px; height: 18px; }
.areas-foot { height: 24px; flex: none; display: flex; justify-content: flex-end; background: linear-gradient(#c6dcfa, #84a9ea); }

/* Ledger window */
.window {
  flex: 1;
  min-width: 0;
  margin: 0 85px 2px 0;
  display: flex;
  flex-direction: column;
  background: #0a3fd8;
  border-radius: 5px 5px 0 0;
  overflow: hidden;
}
.window-title { height: 25px; flex: none; padding: 0 4px 0 6px; gap: 3px; border-radius: 5px 5px 0 0; }
.window-title .caption-buttons { gap: 2px; }
.form-ico { width: 12px; height: 10px; }
.window-body {
  flex: 1;
  min-height: 0;
  margin: 0 4px 3px;
  padding: 5px 8px 9px;
  display: flex;
  flex-direction: column;
  background: #ece9d8;
}
.grid-box {
  position: relative;
  flex: 1;
  min-height: 0;
  display: grid;
  grid-template: minmax(0, 1fr) 13px / minmax(0, 1fr) 13px;
  border: 1px solid #b4b09c;
  border-width: 1px 1px 1px 0;
}
.ledger { width: 100%; height: 100%; border-collapse: separate; border-spacing: 0; table-layout: fixed; background: #fff; }
.c18 { width: 18px; } .c50 { width: 50px; } .c157 { width: 157px; } .c27 { width: 27px; } .c53 { width: 53px; }
.c49 { width: 49px; } .c17 { width: 17px; } .c66 { width: 66px; } .c26 { width: 26px; } .c76 { width: 76px; }
.c24 { width: 24px; } .c23 { width: 23px; }
.ledger th {
  height: 15px;
  padding: 0 0 0 3px;
  font-weight: normal;
  text-align: left;
  white-space: nowrap;
  overflow: hidden;
  background: #ebeadb;
  border-right: 1px solid #d3cfbc;
  border-bottom: 1px solid #cbc7b8;
}
.ledger td {
  padding: 0 2px;
  line-height: 12px;
  white-space: nowrap;
  overflow: hidden;
  border-right: 1px solid #e6e4d6;
  border-bottom: 1px solid #e6e4d6;
}
.ledger td:first-child { border: 1px solid #86a7cb; border-top: 0; }
.ledger td:nth-child(4), .ledger td:nth-child(13), .ledger td:nth-child(14) { text-align: right; }
.ledger td:nth-child(14) { padding: 0; }
.ledger .b td:nth-child(2), .ledger .b td:nth-child(3) { font-weight: bold; }
.ledger .b td:nth-child(3) { font-family: "Open Sans", "Noto Sans", sans-serif; overflow: visible; }
.pointer { display: block; width: 0; margin-left: 8px; border: 4px solid transparent; border-left: 5px solid #000; border-right: 0; }
.ledger td.edit { padding: 0; }
.edit input { display: block; width: 100%; height: 12px; padding-right: 1px; text-align: right; border: 1px dotted #222; background: #fff; }
.look button { display: block; width: 13px; height: 12px; border: 1px solid #23496e; border-radius: 2px; background: #e8edf5; }
.look svg { width: 9px; height: 9px; margin: auto; }
.grid-v { padding-top: 15px; }
.grid-v .thumb { height: 75px; margin-top: 237px; }
.grid-h .stub { width: 18px; background: #ece9d8; border-right: 1px solid #86a7cb; }
.grid-h .thumb { width: 86%; margin-left: 3px; }
.tooltip {
  position: absolute;
  left: 347px;
  top: 110px;
  height: 15px;
  padding: 0 1px;
  line-height: 13px;
  background: #ffffe1;
  border: 1px solid #333;
}
.actions { display: flex; justify-content: flex-end; gap: 9px; margin-top: 19px; }
.actions button {
  width: 64px;
  height: 15px;
  display: flex;
  align-items: center;
  border: 1px solid #1f4a7c;
  border-radius: 2px;
  background: linear-gradient(#fff, #efeee6);
}
.actions span { flex: 1; white-space: nowrap; }
.actions .menu::after { content: ""; margin-right: 2px; border: 4px solid transparent; border-top: 5px solid #000; border-bottom: 0; }

/* Status bar */
.status { height: 16px; flex: none; display: flex; align-items: center; border-top: 1px solid #fff; }
.status .msg { flex: 1; padding-left: 3px; }
.status span + span { height: 14px; border-left: 1px solid #c9c5b2; }
.s95 { width: 97px; } .s48 { width: 48px; } .s42 { width: 59px; }
.status .date { text-align: center; font-family: "DejaVu Sans Condensed", "DejaVu Sans", sans-serif; line-height: 14px; }

/* Task bar */
.taskbar {
  height: 27px;
  flex: none;
  margin-left: 3px;
  display: flex;
  color: #fff;
  background: linear-gradient(#3f8cf3 0, #2a68e2 15%, #245edb 50%, #2258d2 85%, #1c48b4);
}
.start {
  width: 90px;
  display: flex;
  align-items: center;
  gap: 5px;
  padding-left: 8px;
  border-radius: 0 9px 9px 0;
  background: linear-gradient(#7cc07a 0, #3d9a3d 18%, #358f36 70%, #2a742c);
  font: italic 600 14px/20px "Open Sans", "Noto Sans", sans-serif;
  text-shadow: 1px 1px 1px #1d4a1e;
}
.start svg { width: 16px; height: 16px; }
.quick { width: 97px; display: flex; align-items: center; gap: 5px; padding-left: 18px; }
.quick svg { width: 14px; height: 14px; }
.more { align-self: flex-start; padding: 4px 0 0 4px; }
.tasks { flex: 1; min-width: 0; display: flex; gap: 3px; padding: 3px 0 1px; }
.tasks button {
  flex: 1 1 0;
  min-width: 0;
  display: flex;
  align-items: center;
  gap: 3px;
  padding-left: 7px;
  border-radius: 2px;
  background: linear-gradient(#5a9bfa, #3c81f0 20%, #3a7cea 85%, #2c66cf);
  text-align: left;
  white-space: nowrap;
}
.tasks .active { background: #1e52b7; }
.tasks svg { width: 13px; height: 13px; }
.tasks .group::after { content: ""; margin: 0 4px 0 auto; border: 2px solid transparent; border-top: 3px solid #fff; border-bottom: 0; }
.tasks b { color: #ffb08a; }
.lang { width: 36px; }
.tray {
  display: flex;
  align-items: center;
  gap: 1px;
  padding: 0 7px;
  border-left: 1px solid #0d3fa0;
  background: linear-gradient(#3cb4f5 0, #1590e9 15%, #128ae4 80%, #1170c8);
}
.tray svg { width: 13px; height: 13px; }
.tray time { margin-left: 8px; white-space: nowrap; }
```
